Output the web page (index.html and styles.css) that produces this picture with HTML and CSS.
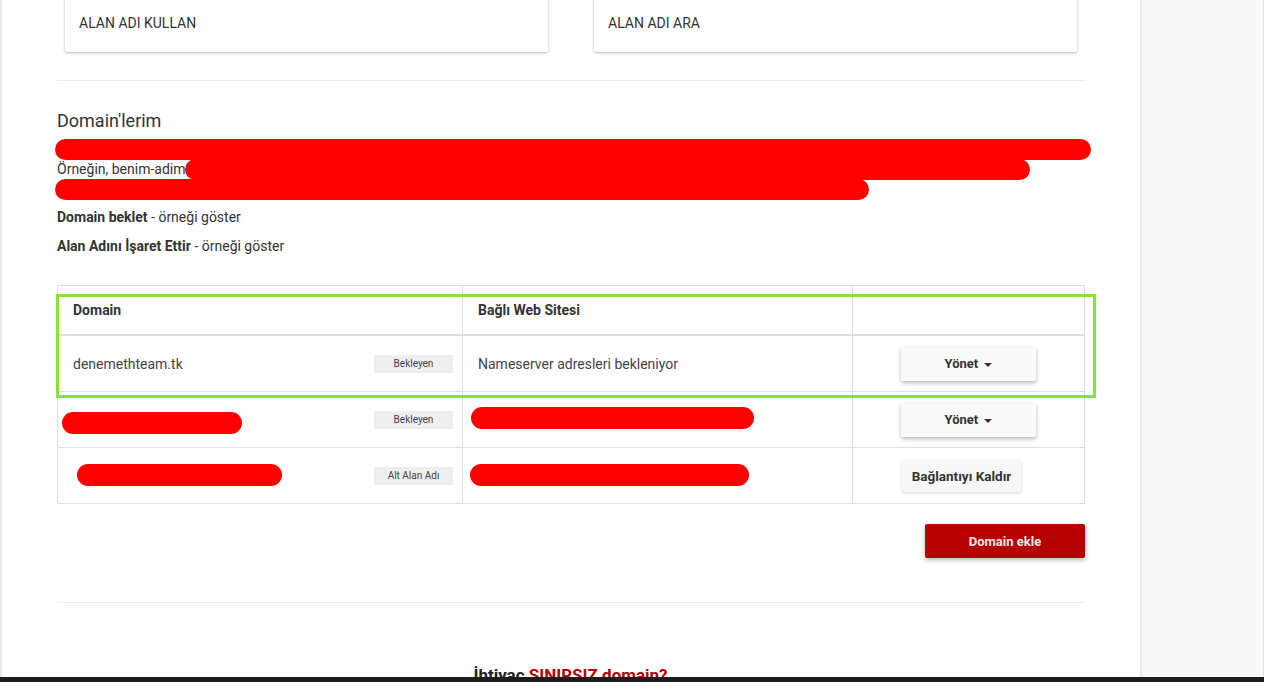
FILE: index.html
```html
<!DOCTYPE html>
<html lang="tr">
<head>
<meta charset="utf-8">
<title>Domain'lerim</title>
<link rel="stylesheet" href="styles.css">
</head>
<body>
<div class="page">
  <div class="edge"></div>
  <main class="main">
    <div class="cards">
      <div class="card">ALAN ADI KULLAN</div>
      <div class="card">ALAN ADI ARA</div>
    </div>
    <hr class="rule rule-top">
    <h2 class="title">Domain'lerim</h2>
    <div class="intro">
      <p class="intro-lines">&nbsp;<br>Örneğin, benim-adim<br>&nbsp;</p>
      <span class="redact ra"></span>
      <span class="redact rb"></span>
      <span class="redact rc"></span>
    </div>
    <p class="hint"><b>Domain beklet</b> - örneği göster</p>
    <p class="hint"><b>Alan Adını İşaret Ettir</b> - örneği göster</p>

    <div class="table-wrap">
      <table class="domains">
        <thead>
          <tr>
            <th class="c1">Domain</th>
            <th class="c2">Bağlı Web Sitesi</th>
            <th class="c3"></th>
          </tr>
        </thead>
        <tbody>
          <tr>
            <td class="c1"><div class="dcell"><span class="dname">denemethteam.tk</span><span class="badge">Bekleyen</span></div></td>
            <td class="c2">Nameserver adresleri bekleniyor</td>
            <td class="c3"><button class="btn-manage">Yönet <span class="caret"></span></button></td>
          </tr>
          <tr>
            <td class="c1"><div class="dcell"><span class="redact inl r2a"></span><span class="badge">Bekleyen</span></div></td>
            <td class="c2"><span class="redact inl r2b"></span></td>
            <td class="c3"><button class="btn-manage">Yönet <span class="caret"></span></button></td>
          </tr>
          <tr>
            <td class="c1"><div class="dcell"><span class="redact inl r3a"></span><span class="badge">Alt Alan Adı</span></div></td>
            <td class="c2"><span class="redact inl r3b"></span></td>
            <td class="c3"><button class="btn-unlink">Bağlantıyı Kaldır</button></td>
          </tr>
        </tbody>
      </table>
      <div class="highlight"></div>
    </div>

    <div class="actions">
      <button class="btn-add">Domain ekle</button>
    </div>
    <hr class="rule rule-bottom">
    <p class="promo">İhtiyaç <span class="promo-red">SINIRSIZ domain?</span></p>
  </main>
  <aside class="side"></aside>
</div>
<div class="bottom-bar"></div>
</body>
</html>
```

FILE: styles.css
```css
html, body {
  margin: 0;
  padding: 0;
  height: 100%;
  overflow: hidden;
}
body {
  font-family: Roboto, "Liberation Sans", Arial, sans-serif;
  font-size: 14px;
  color: #333;
  background: #fff;
}
.page {
  display: flex;
  height: 682px;
  overflow: hidden;
}
.edge {
  width: 2px;
  background: #e9e9e9;
  flex: none;
}
.main {
  width: 1028px;
  padding: 0 55px;
  flex: none;
  background: #fff;
}
.side {
  flex: 1;
  background: #f8f8f8;
  box-shadow: inset 3px 0 3px -2px rgba(0,0,0,0.10);
  border-right: 1px solid #e4e4e4;
}
.cards {
  display: flex;
  gap: 46px;
  padding: 0 8px;
  margin-top: -20px;
}
.card {
  width: 469px;
  padding: 35px 14px 21px;
  line-height: 16px;
  font-size: 14px;
  color: #333;
  background: #fff;
  border-radius: 2px;
  box-shadow: 0 1px 3px rgba(0,0,0,0.28);
}
.rule {
  border: 0;
  height: 1px;
  background: #ececec;
  margin: 0;
}
.rule-top {
  margin-top: 28px;
}
.title {
  font-size: 18px;
  font-weight: 400;
  color: #333;
  margin: 29px 0 0;
  line-height: 22px;
}
.intro {
  position: relative;
  margin-top: 7px;
}
.intro-lines {
  margin: 0;
  line-height: 20px;
  color: #333;
}
.redact {
  background: #fe0000;
  border-radius: 11px;
}
.intro .redact {
  position: absolute;
  height: 21px;
}
.ra { left: -2px; top: 0; width: 1036px; }
.rb { left: 128px; top: 20px; width: 845px; }
.rc { left: -2px; top: 40px; width: 814px; }
.hint {
  margin: 7px 0 0;
  line-height: 22px;
  color: #333;
}
.hint + .hint {
  margin-top: 7px;
}
.hint b {
  font-weight: 700;
}
.table-wrap {
  position: relative;
  margin-top: 28px;
}
.domains {
  width: 100%;
  border-collapse: collapse;
  table-layout: fixed;
}
.domains th, .domains td {
  border: 1px solid #dedede;
  text-align: left;
  vertical-align: middle;
  padding: 0 15px;
}
.domains th {
  height: 48px;
  font-weight: 700;
  border-bottom: 2px solid #dedede;
  color: #333;
}
.domains td {
  height: 55px;
  color: #444;
}
.c1 { width: 374px; }
.c2 { width: 359px; }
.domains td.c1 { padding-right: 9px; }
.domains td.c3 { text-align: center; padding: 0; }
.dcell {
  display: flex;
  align-items: center;
  justify-content: space-between;
}
.badge {
  display: inline-block;
  width: 79px;
  height: 18px;
  line-height: 18px;
  background: #eee;
  font-size: 10px;
  color: #444;
  text-align: center;
}
.redact.inl {
  display: inline-block;
  height: 22px;
  vertical-align: middle;
}
.r2a { width: 180px; margin-left: -11px; margin-top: 6px; }
.r2b { width: 283px; margin-left: -7px; margin-top: -3px; }
.r3a { width: 205px; margin-left: 4px; margin-top: -2px; }
.r3b { width: 279px; margin-left: -8px; margin-top: -2px; }
.btn-manage {
  font-family: inherit;
  width: 135px;
  height: 34px;
  border: 0;
  border-radius: 2px;
  background: #fafafa;
  box-shadow: 0 2px 4px rgba(0,0,0,0.28);
  font-size: 13px;
  font-weight: 700;
  color: #333;
  cursor: pointer;
}
.caret {
  display: inline-block;
  width: 0;
  height: 0;
  margin-left: 3px;
  vertical-align: middle;
  border-top: 4px solid #333;
  border-left: 4px solid transparent;
  border-right: 4px solid transparent;
}
.btn-unlink {
  font-family: inherit;
  height: 32px;
  width: 119px;
  padding: 0;
  border: 0;
  border-radius: 2px;
  background: #f8f8f8;
  box-shadow: 0 1px 3px rgba(0,0,0,0.18);
  font-size: 13.5px;
  font-weight: 700;
  color: #333;
  margin-left: -14px;
}
.highlight {
  position: absolute;
  left: -1px;
  top: 9px;
  width: 1034px;
  height: 98px;
  border: 3px solid #86e52f;
  pointer-events: none;
}
.actions {
  display: flex;
  justify-content: flex-end;
  margin-top: 20px;
}
.btn-add {
  font-family: inherit;
  width: 160px;
  height: 34px;
  border: 0;
  border-radius: 2px;
  background: #b70000;
  color: #fde8e8;
  font-size: 13px;
  font-weight: 700;
  box-shadow: 0 2px 5px rgba(0,0,0,0.3);
}
.rule-bottom {
  margin-top: 44px;
}
.promo {
  margin: 62px 0 0;
  text-align: center;
  font-size: 17px;
  font-weight: 700;
  line-height: 20px;
  color: #222;
  padding-right: 1px;
}
.promo-red {
  color: #b00000;
}
.bottom-bar {
  position: fixed;
  left: 0;
  right: 0;
  bottom: 0;
  height: 5px;
  background: #1c1c1c;
}
```
